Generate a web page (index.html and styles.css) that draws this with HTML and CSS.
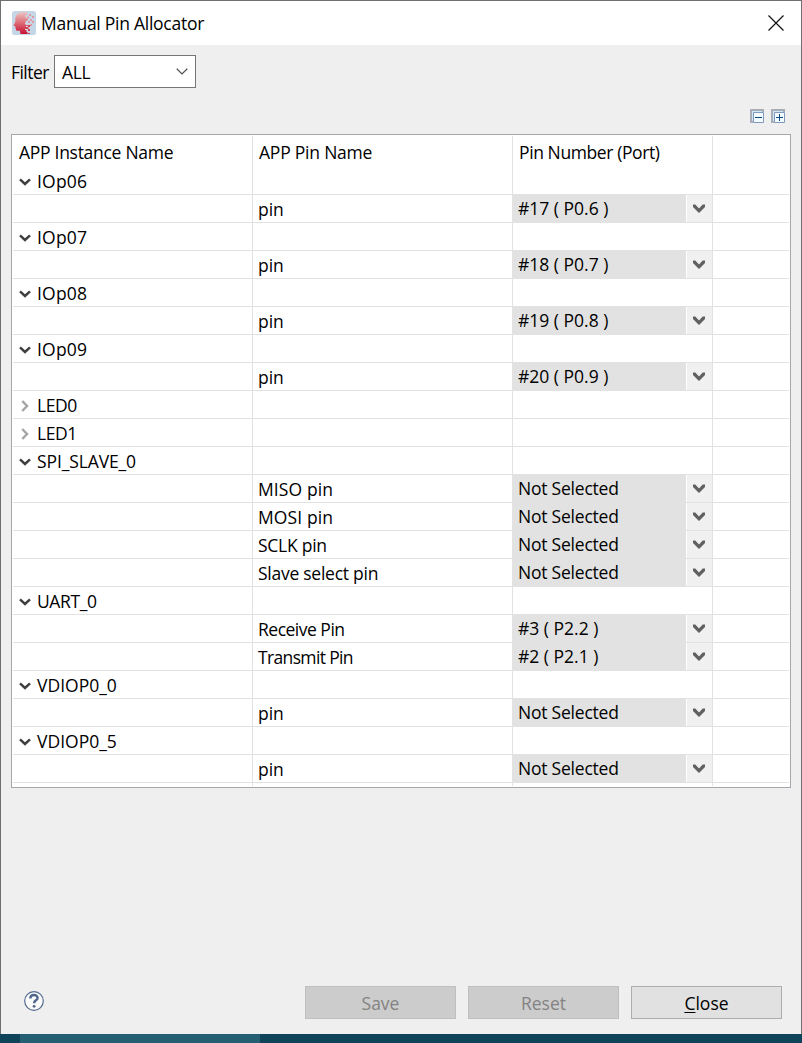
FILE: index.html
```html
<!DOCTYPE html>
<html lang="en">
<head>
<meta charset="utf-8">
<title>Manual Pin Allocator</title>
<link rel="stylesheet" href="styles.css">
</head>
<body>
<svg class="defs" width="0" height="0" aria-hidden="true">
  <defs>
    <linearGradient id="face" x1="0" y1="0" x2="0" y2="1"><stop offset="0" stop-color="#ecc4c4"/><stop offset=".5" stop-color="#dc6a74"/><stop offset="1" stop-color="#c90f35"/></linearGradient>
    <symbol id="open" viewBox="0 0 12 8"><path d="M1 1.400 6 6l5-4.600" fill="none" stroke="#404040" stroke-width="2.500"/></symbol>
    <symbol id="shut" viewBox="0 0 8 12"><path d="M1.300 1 6 6l-4.700 5" fill="none" stroke="#a6a6a6" stroke-width="2.500"/></symbol>
    <symbol id="drop" viewBox="0 0 12 10"><path d="M0 .5h2.300L6 4.400 9.700.5H12V3L6 9 0 3z" fill="#606060"/></symbol>
  </defs>
</svg>
<div class="window">
  <header class="titlebar">
    <svg class="app-icon" width="24" height="24" viewBox="0 0 24 24">
      <rect width="24" height="24" rx="2.500" fill="#c5d6e6"/>
      <path d="M4.500 3.500C7 1 12 .6 15.500 1.700V4h-2v3h2v3h-2v4h3v4h-2v3h1v2H8.500l-.6-3.200H4.500l-.8-2-.5-2.500-1.700-.5 2-4.500c-.5-2-.4-4 1-5.800z" fill="url(#face)"/>
      <path d="M17 3h2v2h-2zM20 5h2v2h-2zM15 5.500h2v2h-2zM18 8h2v2h-2zM16 10h2v2h-2zM20 10h2v2h-2zM18 13h2v2h-2z" fill="#e29aa3"/>
      <path d="M16 14h2v2h-2zM16 18h2v2h-2zM16 22h2v1h-2z" fill="#d6415a"/>
      <path d="M14 5h1v2h-1zM13 12h2v1h-2zM14 15h2v1h-2zM13 18h2v1h-2z" fill="#ead3da"/>
    </svg>
    <h1 class="title">Manual Pin Allocator</h1>
    <svg class="close-x" width="16" height="16" viewBox="0 0 16 16"><path d="M.5.5l15 15M15.500.5l-15 15" stroke="#111" stroke-width="1.200"/></svg>
  </header>
  <div class="filter">
    <span class="filter-label">Filter</span>
    <div class="select"><span class="t-all">ALL</span><svg width="12" height="7" viewBox="0 0 12 7"><path d="M.7.8 6 6 11.300.8" fill="none" stroke="#505050" stroke-width="1.200"/></svg></div>
  </div>
  <div class="tools">
    <svg width="14" height="14" viewBox="0 0 14 14"><path d="M0 0h14v3H3v11H0z" fill="#a9adb5"/><path d="M2 2h10v10H2z" fill="#cfe6f8"/><path d="M3.500 3.500h10v10h-10z" fill="#f2fbff" stroke="#8398bd"/><path d="M5 8.500h7" stroke="#10497e"/></svg>
    <svg width="14" height="14" viewBox="0 0 14 14"><path d="M0 0h14v3H3v11H0z" fill="#a9adb5"/><path d="M2 2h10v10H2z" fill="#cfe6f8"/><path d="M3.500 3.500h10v10h-10z" fill="#f2fbff" stroke="#8398bd"/><path d="M5 8.500h7M8.500 5v7" stroke="#10497e"/></svg>
  </div>
  <main class="table">
    <div class="row head"><div class="cell"><span class="h1">APP Instance Name</span></div><div class="cell"><span class="h2">APP Pin Name</span></div><div class="cell"><span class="h3">Pin Number (Port)</span></div></div>
    <div class="row"><div class="cell group"><svg class="tw"><use href="#open"/></svg><span class="g-io">IOp06</span></div><div class="cell"></div><div class="cell"></div></div>
    <div class="row"><div class="cell"></div><div class="cell pin"><span class="p-pin">pin</span></div><div class="cell combo"><span class="value v-port2">#17 ( P0.6 )</span><span class="btn"><svg><use href="#drop"/></svg></span></div></div>
    <div class="row"><div class="cell group"><svg class="tw"><use href="#open"/></svg><span class="g-io">IOp07</span></div><div class="cell"></div><div class="cell"></div></div>
    <div class="row"><div class="cell"></div><div class="cell pin"><span class="p-pin">pin</span></div><div class="cell combo"><span class="value v-port2">#18 ( P0.7 )</span><span class="btn"><svg><use href="#drop"/></svg></span></div></div>
    <div class="row"><div class="cell group"><svg class="tw"><use href="#open"/></svg><span class="g-io">IOp08</span></div><div class="cell"></div><div class="cell"></div></div>
    <div class="row"><div class="cell"></div><div class="cell pin"><span class="p-pin">pin</span></div><div class="cell combo"><span class="value v-port2">#19 ( P0.8 )</span><span class="btn"><svg><use href="#drop"/></svg></span></div></div>
    <div class="row"><div class="cell group"><svg class="tw"><use href="#open"/></svg><span class="g-io">IOp09</span></div><div class="cell"></div><div class="cell"></div></div>
    <div class="row"><div class="cell"></div><div class="cell pin"><span class="p-pin">pin</span></div><div class="cell combo"><span class="value v-port2">#20 ( P0.9 )</span><span class="btn"><svg><use href="#drop"/></svg></span></div></div>
    <div class="row"><div class="cell group"><svg class="tw shut"><use href="#shut"/></svg><span class="g-led">LED0</span></div><div class="cell"></div><div class="cell"></div></div>
    <div class="row"><div class="cell group"><svg class="tw shut"><use href="#shut"/></svg><span class="g-led">LED1</span></div><div class="cell"></div><div class="cell"></div></div>
    <div class="row"><div class="cell group"><svg class="tw"><use href="#open"/></svg><span class="g-spi">SPI_SLAVE_0</span></div><div class="cell"></div><div class="cell"></div></div>
    <div class="row"><div class="cell"></div><div class="cell pin"><span class="p-miso">MISO pin</span></div><div class="cell combo"><span class="value v-none">Not Selected</span><span class="btn"><svg><use href="#drop"/></svg></span></div></div>
    <div class="row"><div class="cell"></div><div class="cell pin"><span class="p-miso">MOSI pin</span></div><div class="cell combo"><span class="value v-none">Not Selected</span><span class="btn"><svg><use href="#drop"/></svg></span></div></div>
    <div class="row"><div class="cell"></div><div class="cell pin"><span class="p-sclk">SCLK pin</span></div><div class="cell combo"><span class="value v-none">Not Selected</span><span class="btn"><svg><use href="#drop"/></svg></span></div></div>
    <div class="row"><div class="cell"></div><div class="cell pin"><span class="p-slave">Slave select pin</span></div><div class="cell combo"><span class="value v-none">Not Selected</span><span class="btn"><svg><use href="#drop"/></svg></span></div></div>
    <div class="row"><div class="cell group"><svg class="tw"><use href="#open"/></svg><span class="g-uart">UART_0</span></div><div class="cell"></div><div class="cell"></div></div>
    <div class="row"><div class="cell"></div><div class="cell pin"><span class="p-rx">Receive Pin</span></div><div class="cell combo"><span class="value v-port1">#3 ( P2.2 )</span><span class="btn"><svg><use href="#drop"/></svg></span></div></div>
    <div class="row"><div class="cell"></div><div class="cell pin"><span class="p-tx">Transmit Pin</span></div><div class="cell combo"><span class="value v-port1">#2 ( P2.1 )</span><span class="btn"><svg><use href="#drop"/></svg></span></div></div>
    <div class="row"><div class="cell group"><svg class="tw"><use href="#open"/></svg><span class="g-vd">VDIOP0_0</span></div><div class="cell"></div><div class="cell"></div></div>
    <div class="row"><div class="cell"></div><div class="cell pin"><span class="p-pin">pin</span></div><div class="cell combo"><span class="value v-none">Not Selected</span><span class="btn"><svg><use href="#drop"/></svg></span></div></div>
    <div class="row"><div class="cell group"><svg class="tw"><use href="#open"/></svg><span class="g-vd">VDIOP0_5</span></div><div class="cell"></div><div class="cell"></div></div>
    <div class="row"><div class="cell"></div><div class="cell pin"><span class="p-pin">pin</span></div><div class="cell combo"><span class="value v-none">Not Selected</span><span class="btn"><svg><use href="#drop"/></svg></span></div></div>
    <div class="row tail"><div class="cell"></div><div class="cell"></div><div class="cell"></div></div>
  </main>
  <footer class="footer">
    <div class="help"><svg width="20" height="20" viewBox="0 0 20 20"><circle cx="10" cy="10" r="9.300" fill="#fafafa" stroke="#536a90" stroke-width="1.200"/><path d="M6.300 7.400C6.300 2.900 13.600 3 13.600 6.900c0 2.400-3.500 2.500-3.500 5.300" fill="none" stroke="#50658b" stroke-width="2.400"/><circle cx="10.100" cy="15.300" r="1.400" fill="#50658b"/></svg></div>
    <button class="button" disabled><span class="b-save">Save</span></button>
    <button class="button" disabled><span class="b-reset">Reset</span></button>
    <button class="button"><span class="b-close"><u>C</u>lose</span></button>
  </footer>
</div>
<div class="taskbar"><div class="task"></div></div>
</body>
</html>
```
FILE: styles.css
```css
* { box-sizing: border-box; }
body { margin: 0; width: 802px; height: 1043px; overflow: hidden; background: #efefef; color: #000; font: 17.5px/24px "Open Sans", "Noto Sans", sans-serif; white-space: nowrap; }
svg { display: block; flex: none; }
.defs { position: absolute; }
.window { height: 1034px; border: 1px solid #6f6f71; border-bottom: 0; display: flex; flex-direction: column; }
.titlebar { height: 44px; background: #fff; display: flex; align-items: center; padding: 0 17px 0 11px; }
.close-x { margin-top: -1px; }
.title { flex: 1; margin: 0 0 0 5px; font-size: 17.5px; font-weight: 400; letter-spacing: -.26px; }
.filter { display: flex; height: 33px; margin: 10px 0 0 10px; }
.filter-label { width: 43px; padding-top: 5px; letter-spacing: -.55px; }
.select { width: 142px; height: 33px; border: 1px solid #767676; background: #fff; display: flex; align-items: center; justify-content: space-between; padding: 0 7px; }
.tools { display: flex; gap: 7px; margin: 21px 0 0 749px; height: 14px; }
.table { width: 780px; height: 654px; margin: 11px 0 0 10px; padding: 1px; border: 1px solid #a5a7ac; background: #fff; }
.row { display: grid; grid-template-columns: 240px 260px 200px; height: 28px; border-bottom: 1px solid #e2e2e2; }
.row.head { height: 31px; border: 0; }
.row.tail { height: 3px; border: 0; }
.cell { border-right: 1px solid #e2e2e2; height: 100%; display: flex; }
.head .cell { padding: 4px 0 0 6px; }
.group { padding: 2px 0 0 6px; }
.tw { width: 12px; height: 8px; margin: 9px 6px 0 0; }
.tw.shut { width: 8px; height: 12px; margin: 7px 8px 0 2px; }
.pin { padding: 2px 0 0 5px; }
.combo { margin-left: -1px; height: 28px; background: #e2e2e2; }
.value { flex: 1; padding: 1px 0 0 6px; }
.btn { width: 26px; height: 27px; border-left: 1px solid #fff; background: #f0f0f0; padding: 9px 0 0 6px; }
.btn svg { width: 12px; height: 10px; }
.footer { display: flex; margin: 198px 19px 0 23px; gap: 12px; }
.help { flex: 1; padding-top: 5px; }
.button { width: 151px; height: 33px; padding: 0; border: 1px solid #adadad; background: #e1e1e1; color: #000; font: inherit; }
.button:disabled { background: #ccc; border-color: #bfbfbf; color: #838383; }
.button u { text-underline-offset: 2px; text-decoration-thickness: 1px; }
.taskbar { height: 9px; background: #0e4359; padding-left: 20px; }
.task { width: 240px; height: 9px; background: #245e73; }
.t-all, .h3, .g-led, .g-uart { letter-spacing: -.4px; }
.h1 { letter-spacing: -.28px; }
.h2, .v-none { letter-spacing: -.22px; }
.g-io { letter-spacing: .2px; }
.g-spi { letter-spacing: -.12px; }
.g-vd { letter-spacing: 0; }
.p-miso { letter-spacing: .1px; }
.p-sclk, .p-slave { letter-spacing: -.26px; }
.p-rx { letter-spacing: -.5px; }
.p-tx { letter-spacing: -.65px; }
```
